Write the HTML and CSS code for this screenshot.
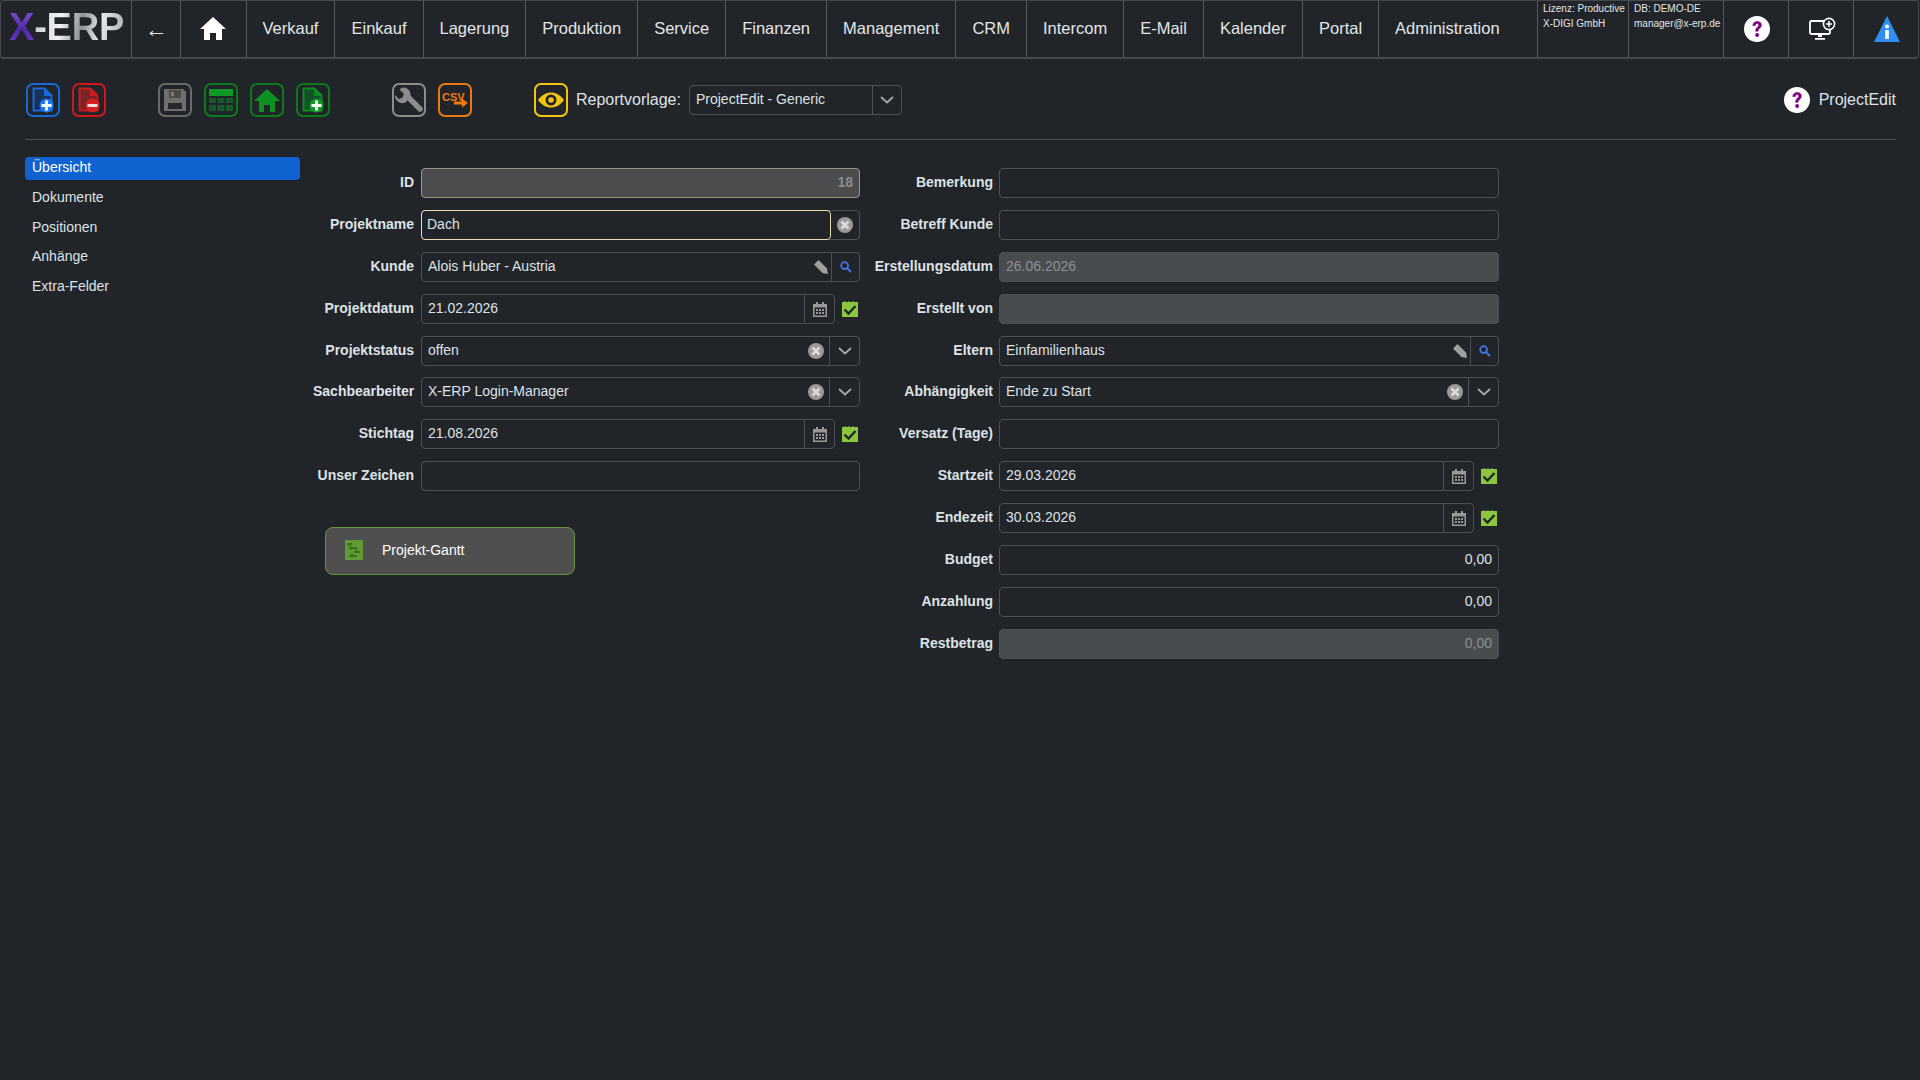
FILE: index.html
```html
<!DOCTYPE html>
<html lang="de">

<head>
    <meta charset="UTF-8">
    <meta name="viewport" content="width=device-width, initial-scale=1.0">
    <title>X-ERP - ProjectEdit</title>
    <link rel="stylesheet" href="styles.css">
</head>

<body>
    <!-- shared glyphs -->
    <svg class="defs" width="0" height="0">
        <symbol id="i-help" viewBox="0 0 26 26">
            <circle cx="13" cy="13" r="13" fill="#fff" />
            <path d="M8.8 9.6c0-2.6 1.9-4.2 4.4-4.2 2.4 0 4.2 1.4 4.2 3.6 0 3.2-3.3 3.2-3.3 6.2h-2.5c0-4 3.1-4.1 3.1-6 0-1-.7-1.6-1.6-1.6-1.1 0-1.7.8-1.8 2z" fill="#800080" stroke="#800080" stroke-width=".6" />
            <circle cx="13.1" cy="19" r="1.9" fill="#800080" />
        </symbol>
        <symbol id="i-clear" viewBox="0 0 16 16">
            <circle cx="8" cy="8" r="8" fill="#9a9a9a" />
            <path d="M4.500 4.500l7 7M11.500 4.500l-7 7" stroke="#dcdcdc" stroke-width="2.500" />
        </symbol>
        <symbol id="i-chevron" viewBox="0 0 14 8">
            <path d="M1 1l6 5.500L13 1" fill="none" stroke="#a8a8a8" stroke-width="1.800" />
        </symbol>
        <symbol id="i-pencil" viewBox="0 0 14 14">
            <path d="M0 4.500L4.500 0 13 8.500 14 14 8.500 13z" fill="#a0a0a0" />
        </symbol>
        <symbol id="i-search" viewBox="0 0 12 12">
            <circle cx="4.600" cy="4.600" r="3.400" fill="none" stroke="#3f78e0" stroke-width="1.800" />
            <path d="M7 7l4 4" stroke="#3f78e0" stroke-width="2" />
        </symbol>
        <symbol id="i-cal" viewBox="0 0 14 16">
            <path d="M0 3h3V1h2v2h4V1h2v2h3v13H0zM1.500 6.500v8h11v-8z" fill="#999" />
            <path d="M3 8h2v2H3zM6 8h2v2H6zM9 8h2v2H9zM3 11h2v2H3zM6 11h2v2H6zM9 11h2v2H9z" fill="#999" />
        </symbol>
        <symbol id="i-check" viewBox="0 0 16 16">
            <path d="M0 1h2.500V0h1v1h3V0h1v1h3V0h1v1H16v15H0z" fill="#8cc63f" />
            <path d="M2.500 8.500l4 4 7-7.500" fill="none" stroke="#20262a" stroke-width="2.400" />
        </symbol>
    </svg>

    <nav class="topnav">
        <div class="nav-cell logo"><span class="logo-x">X</span><span class="logo-erp">-ERP</span></div>
        <div class="nav-cell nav-back">←</div>
        <div class="nav-cell nav-home">
            <svg width="26" height="23" viewBox="0 0 26 23">
                <path d="M13 0l13 12h-4v11h-6v-7h-6v7H4V12H0z" fill="#fff" />
            </svg>
        </div>
        <a class="nav-cell">Verkauf</a>
        <a class="nav-cell">Einkauf</a>
        <a class="nav-cell">Lagerung</a>
        <a class="nav-cell">Produktion</a>
        <a class="nav-cell">Service</a>
        <a class="nav-cell">Finanzen</a>
        <a class="nav-cell">Management</a>
        <a class="nav-cell">CRM</a>
        <a class="nav-cell">Intercom</a>
        <a class="nav-cell">E-Mail</a>
        <a class="nav-cell">Kalender</a>
        <a class="nav-cell">Portal</a>
        <a class="nav-cell nav-grow">Administration</a>
        <div class="nav-cell nav-info nav-lic">
            <span>Lizenz: Productive</span>
            <span>X-DIGI GmbH</span>
        </div>
        <div class="nav-cell nav-info nav-db">
            <span>DB: DEMO-DE</span>
            <span>manager@x-erp.de</span>
        </div>
        <div class="nav-cell nav-ico">
            <svg width="26" height="26"><use href="#i-help" /></svg>
        </div>
        <div class="nav-cell nav-ico">
            <svg width="27" height="24" viewBox="0 0 27 24">
                <path d="M15 4H2.500A1.500 1.500 0 0 0 1 5.500v10A1.500 1.500 0 0 0 2.500 17h17a1.500 1.500 0 0 0 1.500-1.500V13" fill="none" stroke="#fff" stroke-width="1.800" />
                <path d="M9 17h4v3H9zM6 21h10v1.800H6z" fill="#fff" />
                <circle cx="20" cy="7" r="5.600" fill="none" stroke="#fff" stroke-width="1.600" />
                <path d="M20 4v6M17 7h6" stroke="#fff" stroke-width="1.600" />
            </svg>
        </div>
        <div class="nav-cell nav-ico nav-last">
            <svg width="26" height="26" viewBox="0 0 26 26">
                <path d="M13 0l13 26H0z" fill="#2f8ff0" />
                <circle cx="13" cy="10.500" r="2" fill="#fff" />
                <path d="M11.200 14h3.600v9h-3.600z" fill="#fff" />
            </svg>
        </div>
    </nav>

    <div class="toolbar">
        <div class="tool-group">
            <svg class="tool" viewBox="0 0 34 34">
                <rect x="1" y="1" width="32" height="32" rx="6" fill="none" stroke="#1768d8" stroke-width="2" />
                <path d="M7.500 5.500h11l7 7v15h-18z" fill="#17335c" stroke="#1768d8" stroke-width="2" />
                <path d="M18 5l8 8h-8z" fill="#1768d8" />
                <circle cx="20.500" cy="22.500" r="7" fill="#1f78ee" />
                <path d="M20.500 17.500v10M15.500 22.500h10" stroke="#fff" stroke-width="2.800" />
            </svg>
            <svg class="tool" viewBox="0 0 34 34">
                <rect x="1" y="1" width="32" height="32" rx="6" fill="none" stroke="#d01818" stroke-width="2" />
                <path d="M7.500 5.500h11l7 7v15h-18z" fill="#7a2428" stroke="#c81c1c" stroke-width="2" />
                <path d="M18 5l8 8h-8z" fill="#c81c1c" />
                <circle cx="20.500" cy="22.500" r="7" fill="#d62020" />
                <path d="M15.500 22.500h10" stroke="#eee" stroke-width="2.800" />
            </svg>
        </div>
        <div class="tool-group group-save">
            <svg class="tool" viewBox="0 0 34 34">
                <rect x="1" y="1" width="32" height="32" rx="6" fill="none" stroke="#6a6a6a" stroke-width="2" />
                <path d="M6 6h19l3 3v19H6z" fill="#6e6e6e" />
                <path d="M11 7h12v8H11z" fill="#4a4a4a" />
                <path d="M13 9h3v4h-3z" fill="#7c7c7c" />
                <path d="M10 20h14v6H10z" fill="#26292c" />
            </svg>
            <svg class="tool" viewBox="0 0 34 34">
                <rect x="1" y="1" width="32" height="32" rx="6" fill="none" stroke="#0c7a18" stroke-width="2" />
                <path d="M5 6h24v7H5z" fill="#0e9a24" />
                <path d="M5 15h7v5H5zM13.500 15h7v5h-7zM22 15h7v5h-7zM5 22h7v6H5zM13.500 22h7v6h-7zM22 22h7v6h-7z" fill="#17592b" />
            </svg>
            <svg class="tool" viewBox="0 0 34 34">
                <rect x="1" y="1" width="32" height="32" rx="6" fill="none" stroke="#0c7a18" stroke-width="2" />
                <path d="M17 6l13 12h-5v11h-5v-7h-6v7H9V18H4z" fill="#0d9122" />
            </svg>
            <svg class="tool" viewBox="0 0 34 34">
                <rect x="1" y="1" width="32" height="32" rx="6" fill="none" stroke="#0c7a18" stroke-width="2" />
                <path d="M7.500 5.500h11l7 7v15h-18z" fill="#14502a" stroke="#0d8a1f" stroke-width="2" />
                <path d="M18 5l8 8h-8z" fill="#0d8a1f" />
                <circle cx="20.500" cy="22.500" r="7" fill="#0e9a24" />
                <path d="M20.500 17.500v10M15.500 22.500h10" stroke="#fff" stroke-width="2.800" />
            </svg>
        </div>
        <div class="tool-group group-tools">
            <svg class="tool" viewBox="0 0 34 34">
                <rect x="1" y="1" width="32" height="32" rx="6" fill="none" stroke="#8c8c8c" stroke-width="2" />
                <path d="M16 14l12 12" stroke="#8c8c8c" stroke-width="5.500" stroke-linecap="round" />
                <path d="M15 5.500a6.500 6.500 0 0 0-7.500 1l4.500 4.500-1.500 3.500-3.500 1.500-4-4a7.500 7.500 0 0 0 10.500 7.500l4-4a7 7 0 0 0-2.500-10z" fill="#8c8c8c" />
            </svg>
            <svg class="tool" viewBox="0 0 34 34">
                <rect x="1" y="1" width="32" height="32" rx="6" fill="none" stroke="#ec7a14" stroke-width="2" />
                <text class="csv-text" x="4" y="18">CSV</text>
                <path d="M16 18.500h8v-3l6 4.500-6 4.500v-3h-8z" fill="#ec7a14" />
            </svg>
        </div>
        <div class="tool-group group-report">
            <svg class="tool" viewBox="0 0 34 34">
                <rect x="1" y="1" width="32" height="32" rx="6" fill="none" stroke="#f2c511" stroke-width="2" />
                <path d="M4 17c7-10 19-10 26 0-7 10-19 10-26 0z" fill="#f2c511" />
                <circle cx="17" cy="17" r="5.500" fill="#212529" />
                <circle cx="17" cy="17" r="2.800" fill="#f2c511" />
            </svg>
            <span class="report-label">Reportvorlage:</span>
            <div class="field report-select">
                <span class="val">ProjectEdit - Generic</span>
                <span class="addon"><svg width="14" height="8"><use href="#i-chevron" /></svg></span>
            </div>
        </div>
        <div class="page-help">
            <svg width="26" height="26"><use href="#i-help" /></svg>
            <span>ProjectEdit</span>
        </div>
    </div>

    <main class="main">
        <ul class="sidebar">
            <li class="active">Übersicht</li>
            <li>Dokumente</li>
            <li>Positionen</li>
            <li>Anhänge</li>
            <li>Extra-Felder</li>
        </ul>

        <div class="form-col col-left">
            <div class="row">
                <label>ID</label>
                <div class="field field-id"><span class="val num">18</span></div>
            </div>
            <div class="row">
                <label>Projektname</label>
                <div class="field">
                    <span class="val val-focus">Dach</span>
                    <span class="addon addon-bare"><svg width="16" height="16"><use href="#i-clear" /></svg></span>
                </div>
            </div>
            <div class="row">
                <label>Kunde</label>
                <div class="field">
                    <span class="val">Alois Huber - Austria</span>
                    <svg class="inner-ico" width="14" height="14"><use href="#i-pencil" /></svg>
                    <span class="addon addon-s"><svg width="12" height="12"><use href="#i-search" /></svg></span>
                </div>
            </div>
            <div class="row">
                <label>Projektdatum</label>
                <div class="date-wrap">
                    <div class="field">
                        <span class="val">21.02.2026</span>
                        <span class="addon"><svg width="14" height="16"><use href="#i-cal" /></svg></span>
                    </div>
                    <svg class="check" width="16" height="16"><use href="#i-check" /></svg>
                </div>
            </div>
            <div class="row">
                <label>Projektstatus</label>
                <div class="field">
                    <span class="val">offen</span>
                    <svg class="inner-ico clear-ico" width="16" height="16"><use href="#i-clear" /></svg>
                    <span class="addon"><svg width="14" height="8"><use href="#i-chevron" /></svg></span>
                </div>
            </div>
            <div class="row">
                <label>Sachbearbeiter</label>
                <div class="field">
                    <span class="val">X-ERP Login-Manager</span>
                    <svg class="inner-ico clear-ico" width="16" height="16"><use href="#i-clear" /></svg>
                    <span class="addon"><svg width="14" height="8"><use href="#i-chevron" /></svg></span>
                </div>
            </div>
            <div class="row">
                <label>Stichtag</label>
                <div class="date-wrap">
                    <div class="field">
                        <span class="val">21.08.2026</span>
                        <span class="addon"><svg width="14" height="16"><use href="#i-cal" /></svg></span>
                    </div>
                    <svg class="check" width="16" height="16"><use href="#i-check" /></svg>
                </div>
            </div>
            <div class="row">
                <label>Unser Zeichen</label>
                <div class="field"><span class="val"></span></div>
            </div>
            <button class="gantt-btn">
                <svg width="18" height="20" viewBox="0 0 18 20">
                    <rect width="18" height="20" fill="#5f9a32" />
                    <path d="M2 3h5v2H2zM6 7h6v2H6zM9 11h6v2H9zM4 15h8v2H4z" fill="#3f6e26" />
                    <path d="M5 5v4h2M11 9v3M7 13v3" fill="none" stroke="#2f5a1e" stroke-width="1" />
                </svg>
                <span>Projekt-Gantt</span>
            </button>
        </div>

        <div class="form-col col-right">
            <div class="row">
                <label>Bemerkung</label>
                <div class="field"><span class="val"></span></div>
            </div>
            <div class="row">
                <label>Betreff Kunde</label>
                <div class="field"><span class="val"></span></div>
            </div>
            <div class="row">
                <label>Erstellungsdatum</label>
                <div class="field field-off"><span class="val">26.06.2026</span></div>
            </div>
            <div class="row">
                <label>Erstellt von</label>
                <div class="field field-off"><span class="val"></span></div>
            </div>
            <div class="row">
                <label>Eltern</label>
                <div class="field">
                    <span class="val">Einfamilienhaus</span>
                    <svg class="inner-ico" width="14" height="14"><use href="#i-pencil" /></svg>
                    <span class="addon addon-s"><svg width="12" height="12"><use href="#i-search" /></svg></span>
                </div>
            </div>
            <div class="row">
                <label>Abhängigkeit</label>
                <div class="field">
                    <span class="val">Ende zu Start</span>
                    <svg class="inner-ico clear-ico" width="16" height="16"><use href="#i-clear" /></svg>
                    <span class="addon"><svg width="14" height="8"><use href="#i-chevron" /></svg></span>
                </div>
            </div>
            <div class="row">
                <label>Versatz (Tage)</label>
                <div class="field"><span class="val"></span></div>
            </div>
            <div class="row">
                <label>Startzeit</label>
                <div class="date-wrap">
                    <div class="field">
                        <span class="val">29.03.2026</span>
                        <span class="addon"><svg width="14" height="16"><use href="#i-cal" /></svg></span>
                    </div>
                    <svg class="check" width="16" height="16"><use href="#i-check" /></svg>
                </div>
            </div>
            <div class="row">
                <label>Endezeit</label>
                <div class="date-wrap">
                    <div class="field">
                        <span class="val">30.03.2026</span>
                        <span class="addon"><svg width="14" height="16"><use href="#i-cal" /></svg></span>
                    </div>
                    <svg class="check" width="16" height="16"><use href="#i-check" /></svg>
                </div>
            </div>
            <div class="row">
                <label>Budget</label>
                <div class="field"><span class="val num">0,00</span></div>
            </div>
            <div class="row">
                <label>Anzahlung</label>
                <div class="field"><span class="val num">0,00</span></div>
            </div>
            <div class="row">
                <label>Restbetrag</label>
                <div class="field field-off"><span class="val num">0,00</span></div>
            </div>
        </div>
    </main>
</body>

</html>
```

FILE: styles.css
```css
* {
    box-sizing: border-box;
}

html,
body {
    height: 100%;
}

body {
    margin: 0;
    background: #212529;
    color: #dee2e6;
    font-family: "Liberation Sans", Arial, sans-serif;
    font-size: 14px;
    overflow: hidden;
}

.defs {
    position: absolute;
}

/* top navigation */
.topnav {
    display: flex;
    height: 59px;
    width: 1919px;
    border: 1px solid #45494d;
    border-bottom-width: 2px;
    border-radius: 4px;
}

.nav-cell {
    display: flex;
    align-items: center;
    padding: 0 16px 2px;
    border-right: 1px solid #55595d;
    color: #e4e6e8;
    font-size: 16.5px;
    white-space: nowrap;
}

.nav-grow {
    flex: 1;
}

.logo {
    width: 131px;
    padding: 0 0 3px 8px;
    font-size: 38px;
    font-weight: bold;
    letter-spacing: -0.2px;
}

.logo-x {
    background: linear-gradient(180deg, #8a5ad8, #4f26a4 55%, #7a48d0);
    -webkit-background-clip: text;
    background-clip: text;
    color: transparent;
}

.logo-erp {
    background: linear-gradient(100deg, #c4c8cc, #f2f3f4 30%, #8d9399 52%, #e6e8ea 72%, #a4aab0);
    -webkit-background-clip: text;
    background-clip: text;
    color: transparent;
}

.nav-back {
    width: 49px;
    padding: 0;
    justify-content: center;
    font-size: 23px;
}

.nav-home {
    width: 65.5px;
    padding: 0 0 1px;
    justify-content: center;
}

.nav-info {
    flex-direction: column;
    align-items: flex-start;
    padding: 0 0 0 5px;
    font-size: 10px;
    line-height: 15px;
}

.nav-lic {
    width: 91px;
}

.nav-db {
    width: 95px;
}

.nav-ico {
    width: 65px;
    padding: 0 0 0 2px;
    justify-content: center;
}

.nav-last {
    border-right: none;
    width: 64px;
}

/* toolbar */
.toolbar {
    display: flex;
    align-items: center;
    margin: 24px 24px 0 25px;
    padding: 0 0 22px 1px;
    border-bottom: 1px solid #4c5054;
}

.tool-group {
    display: flex;
    align-items: center;
    gap: 12px;
}

.tool {
    width: 34px;
    height: 34px;
    display: block;
}

.group-save {
    margin-left: 52px;
}

.group-tools {
    margin-left: 62px;
}

.group-report {
    margin-left: 62px;
    gap: 8px;
}

.csv-text {
    fill: #ec7a14;
    font-family: "Liberation Sans", sans-serif;
    font-size: 11px;
    font-weight: bold;
}

.report-label {
    font-size: 16px;
    margin-bottom: 1px;
}

.report-select {
    width: 213px;
    flex: none;
}

.report-select .addon {
    width: 29px;
}

.page-help {
    display: flex;
    align-items: center;
    gap: 9px;
    margin-left: auto;
    font-size: 16px;
}

/* body of the page */
.main {
    display: flex;
    align-items: flex-start;
    padding: 17px 0 0 25px;
}

.sidebar {
    width: 275px;
    margin: 0 13px 0 0;
    padding: 0;
    list-style: none;
}

.sidebar li {
    height: 23px;
    margin-bottom: 6.8px;
    padding: 0 7px;
    border-radius: 4px;
    line-height: 20px;
}

.sidebar .active {
    background: #0f62d0;
    color: #fff;
}

.form-col {
    display: flex;
    flex-direction: column;
    gap: 11.9px;
    margin-top: 11px;
}

.col-left {
    width: 547px;
    margin-right: 14px;
}

.col-right {
    width: 625px;
}

.row {
    display: flex;
    align-items: center;
    height: 30px;
    gap: 7px;
}

.col-right .row {
    gap: 6px;
}

.row label {
    width: 101px;
    flex: none;
    margin-bottom: 2px;
    text-align: right;
    font-weight: bold;
    white-space: nowrap;
}

.col-right label {
    width: 119px;
}

/* inputs */
.field {
    display: flex;
    align-items: center;
    flex: 1;
    height: 30px;
    border: 1px solid #495057;
    border-radius: 4px;
}

.val {
    flex: 1;
    height: 28px;
    padding: 0 6px;
    line-height: 26px;
    white-space: nowrap;
}

.num {
    text-align: right;
}

.val-focus {
    height: 30px;
    margin: -1px 0 -1px -1px;
    padding-left: 5px;
    border: 1px solid #e6dfae;
    border-radius: 4px;
}

.field-id {
    background: #4b4c4d;
    border-color: #9a9a82;
    color: #8e8e8e;
    font-weight: bold;
}

.field-off {
    background: #494c4f;
    color: #8c9096;
}

.inner-ico {
    flex: none;
    margin-right: 3px;
}

.clear-ico {
    margin-right: 5px;
}

.addon {
    display: flex;
    align-items: center;
    justify-content: center;
    flex: none;
    width: 30px;
    height: 28px;
    border-left: 1px solid #495057;
}

.addon-s {
    width: 28px;
}

.addon-bare {
    width: 28px;
    border-left: none;
}

.date-wrap {
    display: flex;
    align-items: center;
    flex: 1;
    gap: 7px;
}

.check {
    flex: none;
    margin-right: 2px;
}

.gantt-btn {
    display: flex;
    align-items: center;
    gap: 19px;
    width: 250px;
    height: 48px;
    margin: 24px 0 0 12px;
    padding: 0 0 2px 19px;
    background: #4f4f4f;
    border: 1px solid #64963a;
    border-radius: 8px;
    color: #fff;
    font-family: inherit;
    font-size: 14px;
}
```
